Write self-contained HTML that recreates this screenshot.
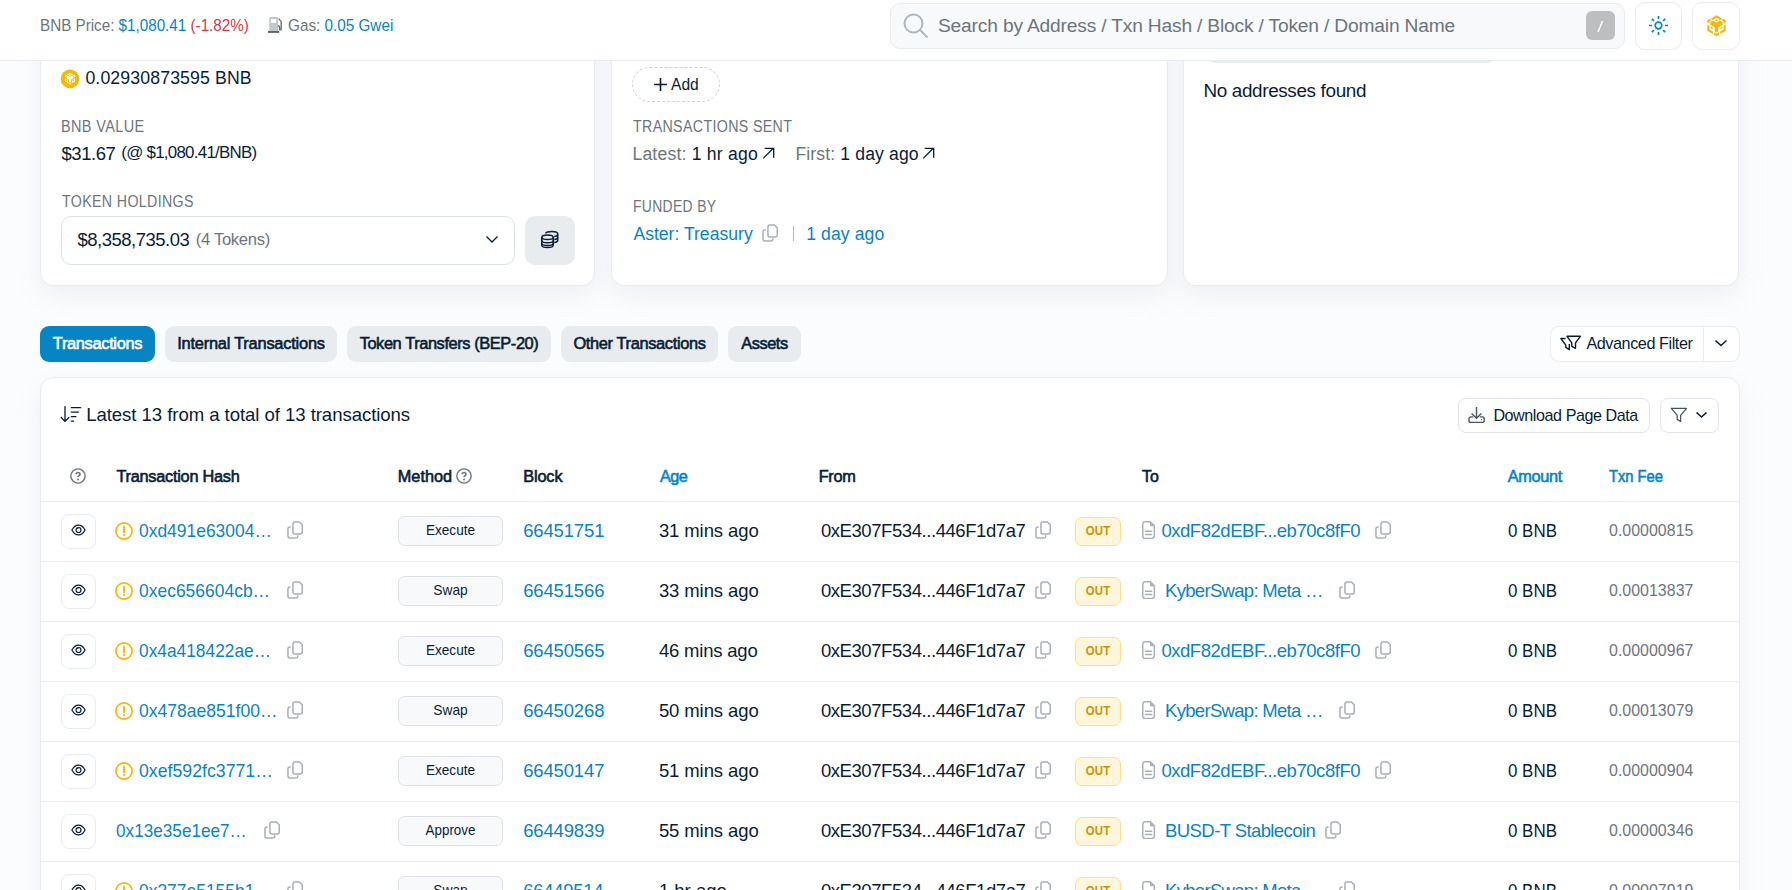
<!DOCTYPE html>
<html><head><meta charset="utf-8"><style>
html,body{margin:0;padding:0;}
body{width:1792px;height:890px;overflow:hidden;position:relative;background:#fbfcfd;font-family:"Liberation Sans",sans-serif;}
.t{position:absolute;white-space:nowrap;}
.b{position:absolute;}
</style></head><body>
<div class="b" style="left:40px;top:-200px;width:555px;height:486px;background:#fff;border:1px solid #e9ecef;border-radius:13px;box-sizing:border-box;box-shadow:0 10px 24px rgba(189,197,209,.2);"></div>
<div class="b" style="left:611px;top:-200px;width:557px;height:486px;background:#fff;border:1px solid #e9ecef;border-radius:13px;box-sizing:border-box;box-shadow:0 10px 24px rgba(189,197,209,.2);"></div>
<div class="b" style="left:1183px;top:-200px;width:556px;height:486px;background:#fff;border:1px solid #e9ecef;border-radius:13px;box-sizing:border-box;box-shadow:0 10px 24px rgba(189,197,209,.2);"></div>
<svg class="b" style="left:60px;top:69px" width="20" height="20" viewBox="0 0 20 20"><circle cx="10" cy="9.9" r="9.3" fill="#f0b90b"/><g fill="#fff" transform="translate(4.75,3.75) scale(0.525)"><path d="M10 0.3L16.2 3.9L13.9 5.2L10 3L6.1 5.2L3.8 3.9Z"/><path d="M10 4.4L11.9 5.5L10 6.6L8.1 5.5Z"/><path d="M0.3 5.5L2.7 4.1L4.9 5.4L2.5 6.8V8.9L0.3 7.6Z"/><path d="M19.7 5.5L17.3 4.1L15.1 5.4L17.5 6.8V8.9L19.7 7.6Z"/><path d="M3.6 7.4L6.5 5.8L10 7.8L13.5 5.8L16.4 7.4V10.4L11.8 13V17.4L10 18.4L8.2 17.4V13L3.6 10.4Z"/><path d="M0.3 9.9L2.5 11.2V15.2L6.2 17.3V19.8L0.3 16.4Z"/><path d="M19.7 9.9L17.5 11.2V15.2L13.8 17.3V19.8L19.7 16.4Z"/><path d="M3.6 11.8L5.9 13.1V15L3.6 13.7Z"/><path d="M16.4 11.8L14.1 13.1V15L16.4 13.7Z"/><path d="M7.3 18.1L10 19.6L12.7 18.1V20.6L10 22.2L7.3 20.6Z"/></g></svg>
<div class="t" style="left:85.40px;top:66.97px;font-size:17.7px;line-height:22px;color:#081d35;letter-spacing:0.125px;">0.02930873595 BNB</div>
<div class="t" style="left:60.91px;top:116.35px;font-size:16.3px;line-height:20px;color:#6c757d;letter-spacing:0.4px;transform:scaleX(0.8913);transform-origin:0 0;">BNB VALUE</div>
<div class="t" style="left:61.50px;top:141.99px;font-size:18.5px;line-height:23px;color:#081d35;letter-spacing:-0.44px;">$31.67</div>
<div class="t" style="left:121.30px;top:141.54px;font-size:16.9px;line-height:21px;color:#081d35;letter-spacing:-0.738px;">(@ $1,080.41/BNB)</div>
<div class="t" style="left:61.80px;top:191.35px;font-size:16.3px;line-height:20px;color:#6c757d;letter-spacing:0.4px;transform:scaleX(0.8733);transform-origin:0 0;">TOKEN HOLDINGS</div>
<div class="b" style="left:61px;top:216px;width:454px;height:49px;border:1px solid #dee2e6;border-radius:10px;box-sizing:border-box;background:#fff;"></div>
<div class="t" style="left:77.50px;top:227.84px;font-size:18.5px;line-height:23px;color:#081d35;letter-spacing:-0.5px;">$8,358,735.03</div>
<div class="t" style="left:195.80px;top:228.55px;font-size:16.6px;line-height:21px;color:#6c757d;letter-spacing:-0.311px;">(4 Tokens)</div>
<svg class="b" style="left:485px;top:235px" width="14" height="9" viewBox="0 0 14 9"><path d="M1.5 1.5l5.5 5.5 5.5-5.5" stroke="#081d35" stroke-width="1.3" fill="none"/></svg>
<div class="b" style="left:525px;top:216px;width:50px;height:49px;background:#e9ecef;border-radius:10px;"></div>
<svg class="b" style="left:540px;top:229px" width="20" height="20" viewBox="0 0 20 20"><g fill="none" stroke="#081d35" stroke-width="1.5"><ellipse cx="7.5" cy="8.3" rx="5.7" ry="2.3"/><path d="M1.8 8.3v8c0 1.3 2.5 2.3 5.7 2.3s5.7-1 5.7-2.3v-8"/><path d="M1.8 11.5c0 1.3 2.5 2.3 5.7 2.3s5.7-1 5.7-2.3M1.8 14.3c0 1.3 2.5 2.3 5.7 2.3s5.7-1 5.7-2.3"/><path d="M5.5 4.3C6.2 3.2 8.6 2.4 12 2.4c3.2 0 5.7 1 5.7 2.3v6.8c0 1-1.5 1.8-3.5 2.1"/><path d="M14.2 7.6c2-.3 3.5-1.1 3.5-2.1"/><path d="M14.2 10.5c2-.3 3.5-1.1 3.5-2.1"/></g></svg>
<div class="b" style="left:632px;top:67px;width:88px;height:35px;border:1px dashed #ced4da;border-radius:18px;box-sizing:border-box;"></div>
<svg class="b" style="left:654px;top:77.5px" width="13" height="13" viewBox="0 0 13 13"><path d="M6.5 0v13M0 6.5h13" stroke="#081d35" stroke-width="1.6"/></svg>
<div class="t" style="left:671.40px;top:73.68px;font-size:16.5px;line-height:21px;color:#081d35;transform:scaleX(0.9448);transform-origin:0 0;">Add</div>
<div class="t" style="left:633.40px;top:116.35px;font-size:16.3px;line-height:20px;color:#6c757d;letter-spacing:0.4px;transform:scaleX(0.8736);transform-origin:0 0;">TRANSACTIONS SENT</div>
<div class="t" style="left:632.40px;top:142.60px;font-size:17.6px;line-height:22px;color:#6c757d;letter-spacing:0.2px;">Latest: <span style="color:#081d35">1 hr ago</span></div>
<svg class="b" style="left:762px;top:146px" width="13" height="13" viewBox="0 0 13 13"><path d="M1.2 12.4L11.3 2.3M2.6 2.3H11.7V11.7" stroke="#081d35" stroke-width="1.3" fill="none"/></svg>
<div class="t" style="left:795.40px;top:142.60px;font-size:17.6px;line-height:22px;color:#6c757d;letter-spacing:0.133px;">First: <span style="color:#081d35">1 day ago</span></div>
<svg class="b" style="left:922px;top:146px" width="13" height="13" viewBox="0 0 13 13"><path d="M1.2 12.4L11.3 2.3M2.6 2.3H11.7V11.7" stroke="#081d35" stroke-width="1.3" fill="none"/></svg>
<div class="t" style="left:632.55px;top:196.35px;font-size:16.3px;line-height:20px;color:#6c757d;letter-spacing:0.4px;transform:scaleX(0.8542);transform-origin:0 0;">FUNDED BY</div>
<div class="t" style="left:633.40px;top:222.90px;font-size:17.6px;line-height:22px;color:#0784c3;">Aster: Treasury</div>
<svg class="b" style="left:762px;top:224px" width="17" height="18" viewBox="0 0 17 18"><g fill="none" stroke="#a9b0b8" stroke-width="1.5"><path d="M5.95 2.95A2 2 0 0 1 7.95 0.95H12.4L15.25 3.8V10.95A2 2 0 0 1 13.25 12.95H7.95A2 2 0 0 1 5.95 10.95Z"/><path d="M3.6 5.95H2.95A2 2 0 0 0 0.95 7.95V15.05A2 2 0 0 0 2.95 17.05H8.75A2 2 0 0 0 10.75 15.05V14.3"/></g></svg>
<div class="b" style="left:793px;top:226px;width:1.2px;height:15px;background:#adb5bd;"></div>
<div class="t" style="left:806.20px;top:222.90px;font-size:17.6px;line-height:22px;color:#0784c3;letter-spacing:0.1px;">1 day ago</div>
<div class="b" style="left:1205px;top:-20px;width:292px;height:83px;border-radius:10px;background:#e9ecef;"></div>
<div class="t" style="left:1203.40px;top:79.35px;font-size:18.9px;line-height:24px;color:#081d35;letter-spacing:-0.353px;">No addresses found</div>
<div class="b" style="left:40px;top:326px;width:115px;height:36px;border-radius:9px;background:#0784c3;"></div>
<div class="t" style="left:52.00px;top:333.12px;font-size:16.4px;line-height:20px;color:#fff;-webkit-text-stroke:0.6px currentColor;letter-spacing:-0.328px;width:91px;text-align:center;">Transactions</div>
<div class="b" style="left:165px;top:326px;width:172px;height:36px;border-radius:9px;background:#e9ecef;"></div>
<div class="t" style="left:177.00px;top:333.12px;font-size:16.4px;line-height:20px;color:#081d35;-webkit-text-stroke:0.6px currentColor;letter-spacing:-0.22px;width:148px;text-align:center;">Internal Transactions</div>
<div class="b" style="left:347px;top:326px;width:204px;height:36px;border-radius:9px;background:#e9ecef;"></div>
<div class="t" style="left:359.00px;top:333.12px;font-size:16.4px;line-height:20px;color:#081d35;-webkit-text-stroke:0.6px currentColor;letter-spacing:-0.409px;width:180px;text-align:center;">Token Transfers (BEP-20)</div>
<div class="b" style="left:561px;top:326px;width:157px;height:36px;border-radius:9px;background:#e9ecef;"></div>
<div class="t" style="left:573.00px;top:333.12px;font-size:16.4px;line-height:20px;color:#081d35;-webkit-text-stroke:0.6px currentColor;letter-spacing:-0.353px;width:133px;text-align:center;">Other Transactions</div>
<div class="b" style="left:728px;top:326px;width:73px;height:36px;border-radius:9px;background:#e9ecef;"></div>
<div class="t" style="left:740.00px;top:333.12px;font-size:16.4px;line-height:20px;color:#081d35;-webkit-text-stroke:0.6px currentColor;letter-spacing:-0.48px;width:49px;text-align:center;">Assets</div>
<div class="b" style="left:1550px;top:326px;width:190px;height:36px;background:#fff;border:1px solid #e9ecef;border-radius:9px;box-sizing:border-box;"></div>
<div class="b" style="left:1703px;top:327px;width:1px;height:34px;background:#e9ecef;"></div>
<svg class="b" style="left:1560px;top:335px" width="22" height="16" viewBox="0 0 22 16"><g fill="none" stroke="#081d35" stroke-width="1.4" stroke-linejoin="round"><path d="M7 1.3H20.3L15.5 7.8V13.3L11.8 11.3V7.8Z"/><path d="M5.6 3.5H0.9L5.8 10.2V12.4L9.3 14.6V9"/></g></svg>
<div class="t" style="left:1586.40px;top:333.29px;font-size:16.2px;line-height:20px;color:#081d35;letter-spacing:-0.429px;">Advanced Filter</div>
<svg class="b" style="left:1714px;top:339px" width="14" height="8" viewBox="0 0 14 8"><path d="M1.5 1.5l5.5 5 5.5-5" stroke="#081d35" stroke-width="1.6" fill="none"/></svg>
<div class="b" style="left:40px;top:377px;width:1700px;height:800px;background:#fff;border:1px solid #e9ecef;border-radius:13px;box-sizing:border-box;box-shadow:0 10px 24px rgba(189,197,209,.2);"></div>
<svg class="b" style="left:60px;top:406px" width="22" height="17" viewBox="0 0 22 17"><g stroke="#081d35" stroke-width="1.3" fill="none" stroke-linecap="round"><path d="M5 0.6V15.4M1.2 11.5L5 15.4L8.8 11.5"/><path d="M11.3 1.7H20.6M11.3 6.1H18.4M11.3 10.7H15.9M11.3 15.1H13.7"/></g></svg>
<div class="t" style="left:86.20px;top:403.06px;font-size:18.6px;line-height:23px;color:#081d35;letter-spacing:-0.066px;">Latest 13 from a total of 13 transactions</div>
<div class="b" style="left:1458px;top:398px;width:192px;height:35px;background:#fff;border:1px solid #e3e6ea;border-radius:8px;box-sizing:border-box;"></div>
<svg class="b" style="left:1468px;top:405px" width="17" height="19" viewBox="0 0 17 19"><g fill="none" stroke="#4b5563" stroke-width="1.4"><path d="M8.5 2V13.3M3.6 8.4L8.5 13.3L13.4 8.4"/><path d="M5.2 11.9H3A2 2 0 0 0 1 13.9V15.4A2 2 0 0 0 3 17.4H14.2A2 2 0 0 0 16.2 15.4V13.9A2 2 0 0 0 14.2 11.9H11.8"/></g><circle cx="13.6" cy="14.6" r="0.7" fill="#4b5563"/></svg>
<div class="t" style="left:1493.40px;top:405.32px;font-size:16.1px;line-height:20px;color:#081d35;letter-spacing:-0.423px;">Download Page Data</div>
<div class="b" style="left:1660px;top:398px;width:59px;height:35px;background:#fff;border:1px solid #e3e6ea;border-radius:8px;box-sizing:border-box;"></div>
<svg class="b" style="left:1670px;top:407px" width="18" height="17" viewBox="0 0 18 17"><path d="M1.3 1.3h15.2l-5.9 7v6.2l-3.4-2.1V8.3z" fill="none" stroke="#4b5563" stroke-width="1.25" stroke-linejoin="round"/></svg>
<svg class="b" style="left:1695px;top:411px" width="13" height="8" viewBox="0 0 13 8"><path d="M1.5 1.5l5 4.5 5-4.5" stroke="#081d35" stroke-width="1.6" fill="none"/></svg>
<svg class="b" style="left:70px;top:468px" width="16" height="16" viewBox="0 0 16 16"><circle cx="8" cy="8" r="7.15" fill="none" stroke="#6c757d" stroke-width="1.4"/><path d="M6.1 6.3c0-1.1.85-1.85 1.95-1.85s1.95.75 1.95 1.75c0 1.4-1.9 1.5-1.9 2.9" stroke="#6c757d" stroke-width="1.6" fill="none"/><circle cx="8.05" cy="11.5" r="1" fill="#6c757d"/></svg>
<div class="t" style="left:116.40px;top:466.35px;font-size:16.3px;line-height:20px;color:#081d35;-webkit-text-stroke:0.6px currentColor;letter-spacing:-0.24px;">Transaction Hash</div>
<div class="t" style="left:397.80px;top:466.35px;font-size:16.3px;line-height:20px;color:#081d35;-webkit-text-stroke:0.6px currentColor;">Method</div>
<svg class="b" style="left:456px;top:468px" width="16" height="16" viewBox="0 0 16 16"><circle cx="8" cy="8" r="7.15" fill="none" stroke="#6c757d" stroke-width="1.4"/><path d="M6.1 6.3c0-1.1.85-1.85 1.95-1.85s1.95.75 1.95 1.75c0 1.4-1.9 1.5-1.9 2.9" stroke="#6c757d" stroke-width="1.6" fill="none"/><circle cx="8.05" cy="11.5" r="1" fill="#6c757d"/></svg>
<div class="t" style="left:523.15px;top:466.35px;font-size:16.3px;line-height:20px;color:#081d35;-webkit-text-stroke:0.6px currentColor;letter-spacing:-0.1px;">Block</div>
<div class="t" style="left:659.90px;top:466.35px;font-size:16.3px;line-height:20px;color:#0784c3;-webkit-text-stroke:0.6px currentColor;letter-spacing:-0.5px;">Age</div>
<div class="t" style="left:818.70px;top:466.35px;font-size:16.3px;line-height:20px;color:#081d35;-webkit-text-stroke:0.6px currentColor;letter-spacing:-0.267px;">From</div>
<div class="t" style="left:1141.60px;top:466.35px;font-size:16.3px;line-height:20px;color:#081d35;-webkit-text-stroke:0.6px currentColor;transform:scaleX(0.9765);transform-origin:0 0;">To</div>
<div class="t" style="left:1507.70px;top:466.35px;font-size:16.3px;line-height:20px;color:#0784c3;-webkit-text-stroke:0.6px currentColor;letter-spacing:-0.32px;">Amount</div>
<div class="t" style="left:1609.00px;top:466.35px;font-size:16.3px;line-height:20px;color:#0784c3;-webkit-text-stroke:0.6px currentColor;transform:scaleX(0.9033);transform-origin:0 0;">Txn Fee</div>
<div class="b" style="left:41px;top:501px;width:1698px;height:1px;background:#e9ecef;"></div>
<div class="b" style="left:61px;top:514px;width:35px;height:35px;border:1px solid #e9ecef;border-radius:8px;box-sizing:border-box;background:#fff;"></div>
<svg class="b" style="left:71px;top:524px" width="15" height="12" viewBox="0 0 15 12"><g fill="none" stroke="#081d35" stroke-width="1.2"><path d="M0.9 6C2.6 2.8 5 1.1 7.5 1.1S12.4 2.8 14.1 6C12.4 9.2 10 10.9 7.5 10.9S2.6 9.2 0.9 6z"/><circle cx="7.5" cy="6" r="2.5"/></g><path d="M6 5a1.5 1.5 0 0 1 1.5-1.3V5z" fill="#081d35"/></svg>
<svg class="b" style="left:115px;top:521.5px" width="18" height="18" viewBox="0 0 18 18"><circle cx="9" cy="9" r="8.1" fill="none" stroke="#ffb300" stroke-width="1.7"/><path d="M9 4.6v5.6" stroke="#ffb300" stroke-width="1.9" stroke-linecap="round"/><circle cx="9" cy="13.1" r="1.05" fill="#ffb300"/></svg>
<div class="t" style="left:139.10px;top:518.89px;font-size:18.5px;line-height:23px;color:#0784c3;transform:scaleX(0.9424);transform-origin:0 0;">0xd491e63004…</div>
<svg class="b" style="left:287px;top:521px" width="17" height="18" viewBox="0 0 17 18"><g fill="none" stroke="#a9b0b8" stroke-width="1.5"><path d="M5.95 2.95A2 2 0 0 1 7.95 0.95H12.4L15.25 3.8V10.95A2 2 0 0 1 13.25 12.95H7.95A2 2 0 0 1 5.95 10.95Z"/><path d="M3.6 5.95H2.95A2 2 0 0 0 0.95 7.95V15.05A2 2 0 0 0 2.95 17.05H8.75A2 2 0 0 0 10.75 15.05V14.3"/></g></svg>
<div class="b" style="left:398px;top:516px;width:105px;height:30px;border:1px solid #dee2e6;border-radius:7px;box-sizing:border-box;background:#f8f9fa;"></div>
<div class="t" style="left:398.00px;top:521.34px;font-size:14.6px;line-height:18px;color:#081d35;transform:scaleX(0.9314);transform-origin:50% 0;width:105px;text-align:center;">Execute</div>
<div class="t" style="left:523.15px;top:518.89px;font-size:18.5px;line-height:23px;color:#0784c3;letter-spacing:-0.143px;">66451751</div>
<div class="t" style="left:658.90px;top:518.89px;font-size:18.5px;line-height:23px;color:#081d35;letter-spacing:-0.1px;">31 mins ago</div>
<div class="t" style="left:820.90px;top:518.89px;font-size:18.5px;line-height:23px;color:#081d35;letter-spacing:-0.429px;">0xE307F534...446F1d7a7</div>
<svg class="b" style="left:1035px;top:521px" width="17" height="18" viewBox="0 0 17 18"><g fill="none" stroke="#a9b0b8" stroke-width="1.5"><path d="M5.95 2.95A2 2 0 0 1 7.95 0.95H12.4L15.25 3.8V10.95A2 2 0 0 1 13.25 12.95H7.95A2 2 0 0 1 5.95 10.95Z"/><path d="M3.6 5.95H2.95A2 2 0 0 0 0.95 7.95V15.05A2 2 0 0 0 2.95 17.05H8.75A2 2 0 0 0 10.75 15.05V14.3"/></g></svg>
<div class="b" style="left:1075px;top:517px;width:46px;height:29px;border:1px solid #ffe08a;border-radius:7px;box-sizing:border-box;background:#fff6dc;"></div>
<div class="t" style="left:1075.00px;top:522.87px;font-size:12.5px;line-height:16px;color:#c99400;font-weight:700;letter-spacing:0.2px;transform:scaleX(0.9148);transform-origin:50% 0;width:46px;text-align:center;">OUT</div>
<svg class="b" style="left:1141px;top:521px" width="15" height="18" viewBox="0 0 15 18"><g fill="none" stroke="#a9b0b8" stroke-width="1.5"><path d="M1.75 2.9A2.1 2.1 0 0 1 3.85 0.8H9.3L13.35 4.9V15.3A2.1 2.1 0 0 1 11.25 17.4H3.85A2.1 2.1 0 0 1 1.75 15.3Z"/><path d="M4.6 10.2H10.6M4.6 13.4H10.6" stroke-linecap="round"/></g><path d="M9 0.8V5.3H13.6Z" fill="#a9b0b8"/></svg>
<div class="t" style="left:1161.40px;top:518.89px;font-size:18.5px;line-height:23px;color:#0784c3;letter-spacing:-0.457px;">0xdF82dEBF...eb70c8fF0</div>
<svg class="b" style="left:1375px;top:521px" width="17" height="18" viewBox="0 0 17 18"><g fill="none" stroke="#a9b0b8" stroke-width="1.5"><path d="M5.95 2.95A2 2 0 0 1 7.95 0.95H12.4L15.25 3.8V10.95A2 2 0 0 1 13.25 12.95H7.95A2 2 0 0 1 5.95 10.95Z"/><path d="M3.6 5.95H2.95A2 2 0 0 0 0.95 7.95V15.05A2 2 0 0 0 2.95 17.05H8.75A2 2 0 0 0 10.75 15.05V14.3"/></g></svg>
<div class="t" style="left:1507.90px;top:518.89px;font-size:18.5px;line-height:23px;color:#081d35;transform:scaleX(0.9151);transform-origin:0 0;">0 BNB</div>
<div class="t" style="left:1609.00px;top:521.09px;font-size:15.9px;line-height:20px;color:#6c757d;letter-spacing:0.044px;">0.00000815</div>
<div class="b" style="left:41px;top:561px;width:1698px;height:1px;background:#e9ecef;"></div>
<div class="b" style="left:61px;top:574px;width:35px;height:35px;border:1px solid #e9ecef;border-radius:8px;box-sizing:border-box;background:#fff;"></div>
<svg class="b" style="left:71px;top:584px" width="15" height="12" viewBox="0 0 15 12"><g fill="none" stroke="#081d35" stroke-width="1.2"><path d="M0.9 6C2.6 2.8 5 1.1 7.5 1.1S12.4 2.8 14.1 6C12.4 9.2 10 10.9 7.5 10.9S2.6 9.2 0.9 6z"/><circle cx="7.5" cy="6" r="2.5"/></g><path d="M6 5a1.5 1.5 0 0 1 1.5-1.3V5z" fill="#081d35"/></svg>
<svg class="b" style="left:115px;top:581.5px" width="18" height="18" viewBox="0 0 18 18"><circle cx="9" cy="9" r="8.1" fill="none" stroke="#ffb300" stroke-width="1.7"/><path d="M9 4.6v5.6" stroke="#ffb300" stroke-width="1.9" stroke-linecap="round"/><circle cx="9" cy="13.1" r="1.05" fill="#ffb300"/></svg>
<div class="t" style="left:139.10px;top:578.89px;font-size:18.5px;line-height:23px;color:#0784c3;transform:scaleX(0.9438);transform-origin:0 0;">0xec656604cb…</div>
<svg class="b" style="left:287px;top:581px" width="17" height="18" viewBox="0 0 17 18"><g fill="none" stroke="#a9b0b8" stroke-width="1.5"><path d="M5.95 2.95A2 2 0 0 1 7.95 0.95H12.4L15.25 3.8V10.95A2 2 0 0 1 13.25 12.95H7.95A2 2 0 0 1 5.95 10.95Z"/><path d="M3.6 5.95H2.95A2 2 0 0 0 0.95 7.95V15.05A2 2 0 0 0 2.95 17.05H8.75A2 2 0 0 0 10.75 15.05V14.3"/></g></svg>
<div class="b" style="left:398px;top:576px;width:105px;height:30px;border:1px solid #dee2e6;border-radius:7px;box-sizing:border-box;background:#f8f9fa;"></div>
<div class="t" style="left:398.00px;top:581.34px;font-size:14.6px;line-height:18px;color:#081d35;transform:scaleX(0.9429);transform-origin:50% 0;width:105px;text-align:center;">Swap</div>
<div class="t" style="left:523.15px;top:578.89px;font-size:18.5px;line-height:23px;color:#0784c3;letter-spacing:-0.143px;">66451566</div>
<div class="t" style="left:658.90px;top:578.89px;font-size:18.5px;line-height:23px;color:#081d35;letter-spacing:-0.1px;">33 mins ago</div>
<div class="t" style="left:820.90px;top:578.89px;font-size:18.5px;line-height:23px;color:#081d35;letter-spacing:-0.429px;">0xE307F534...446F1d7a7</div>
<svg class="b" style="left:1035px;top:581px" width="17" height="18" viewBox="0 0 17 18"><g fill="none" stroke="#a9b0b8" stroke-width="1.5"><path d="M5.95 2.95A2 2 0 0 1 7.95 0.95H12.4L15.25 3.8V10.95A2 2 0 0 1 13.25 12.95H7.95A2 2 0 0 1 5.95 10.95Z"/><path d="M3.6 5.95H2.95A2 2 0 0 0 0.95 7.95V15.05A2 2 0 0 0 2.95 17.05H8.75A2 2 0 0 0 10.75 15.05V14.3"/></g></svg>
<div class="b" style="left:1075px;top:577px;width:46px;height:29px;border:1px solid #ffe08a;border-radius:7px;box-sizing:border-box;background:#fff6dc;"></div>
<div class="t" style="left:1075.00px;top:582.87px;font-size:12.5px;line-height:16px;color:#c99400;font-weight:700;letter-spacing:0.2px;transform:scaleX(0.9148);transform-origin:50% 0;width:46px;text-align:center;">OUT</div>
<svg class="b" style="left:1141px;top:581px" width="15" height="18" viewBox="0 0 15 18"><g fill="none" stroke="#a9b0b8" stroke-width="1.5"><path d="M1.75 2.9A2.1 2.1 0 0 1 3.85 0.8H9.3L13.35 4.9V15.3A2.1 2.1 0 0 1 11.25 17.4H3.85A2.1 2.1 0 0 1 1.75 15.3Z"/><path d="M4.6 10.2H10.6M4.6 13.4H10.6" stroke-linecap="round"/></g><path d="M9 0.8V5.3H13.6Z" fill="#a9b0b8"/></svg>
<div class="t" style="left:1165.10px;top:578.89px;font-size:18.5px;line-height:23px;color:#0784c3;letter-spacing:-0.7px;">KyberSwap: Meta …</div>
<svg class="b" style="left:1339px;top:581px" width="17" height="18" viewBox="0 0 17 18"><g fill="none" stroke="#a9b0b8" stroke-width="1.5"><path d="M5.95 2.95A2 2 0 0 1 7.95 0.95H12.4L15.25 3.8V10.95A2 2 0 0 1 13.25 12.95H7.95A2 2 0 0 1 5.95 10.95Z"/><path d="M3.6 5.95H2.95A2 2 0 0 0 0.95 7.95V15.05A2 2 0 0 0 2.95 17.05H8.75A2 2 0 0 0 10.75 15.05V14.3"/></g></svg>
<div class="t" style="left:1507.90px;top:578.89px;font-size:18.5px;line-height:23px;color:#081d35;transform:scaleX(0.9151);transform-origin:0 0;">0 BNB</div>
<div class="t" style="left:1609.00px;top:581.09px;font-size:15.9px;line-height:20px;color:#6c757d;letter-spacing:0.044px;">0.00013837</div>
<div class="b" style="left:41px;top:621px;width:1698px;height:1px;background:#e9ecef;"></div>
<div class="b" style="left:61px;top:634px;width:35px;height:35px;border:1px solid #e9ecef;border-radius:8px;box-sizing:border-box;background:#fff;"></div>
<svg class="b" style="left:71px;top:644px" width="15" height="12" viewBox="0 0 15 12"><g fill="none" stroke="#081d35" stroke-width="1.2"><path d="M0.9 6C2.6 2.8 5 1.1 7.5 1.1S12.4 2.8 14.1 6C12.4 9.2 10 10.9 7.5 10.9S2.6 9.2 0.9 6z"/><circle cx="7.5" cy="6" r="2.5"/></g><path d="M6 5a1.5 1.5 0 0 1 1.5-1.3V5z" fill="#081d35"/></svg>
<svg class="b" style="left:115px;top:641.5px" width="18" height="18" viewBox="0 0 18 18"><circle cx="9" cy="9" r="8.1" fill="none" stroke="#ffb300" stroke-width="1.7"/><path d="M9 4.6v5.6" stroke="#ffb300" stroke-width="1.9" stroke-linecap="round"/><circle cx="9" cy="13.1" r="1.05" fill="#ffb300"/></svg>
<div class="t" style="left:139.10px;top:638.89px;font-size:18.5px;line-height:23px;color:#0784c3;transform:scaleX(0.9367);transform-origin:0 0;">0x4a418422ae…</div>
<svg class="b" style="left:287px;top:641px" width="17" height="18" viewBox="0 0 17 18"><g fill="none" stroke="#a9b0b8" stroke-width="1.5"><path d="M5.95 2.95A2 2 0 0 1 7.95 0.95H12.4L15.25 3.8V10.95A2 2 0 0 1 13.25 12.95H7.95A2 2 0 0 1 5.95 10.95Z"/><path d="M3.6 5.95H2.95A2 2 0 0 0 0.95 7.95V15.05A2 2 0 0 0 2.95 17.05H8.75A2 2 0 0 0 10.75 15.05V14.3"/></g></svg>
<div class="b" style="left:398px;top:636px;width:105px;height:30px;border:1px solid #dee2e6;border-radius:7px;box-sizing:border-box;background:#f8f9fa;"></div>
<div class="t" style="left:398.00px;top:641.34px;font-size:14.6px;line-height:18px;color:#081d35;transform:scaleX(0.9314);transform-origin:50% 0;width:105px;text-align:center;">Execute</div>
<div class="t" style="left:523.15px;top:638.89px;font-size:18.5px;line-height:23px;color:#0784c3;letter-spacing:-0.143px;">66450565</div>
<div class="t" style="left:658.90px;top:638.89px;font-size:18.5px;line-height:23px;color:#081d35;letter-spacing:-0.2px;">46 mins ago</div>
<div class="t" style="left:820.90px;top:638.89px;font-size:18.5px;line-height:23px;color:#081d35;letter-spacing:-0.429px;">0xE307F534...446F1d7a7</div>
<svg class="b" style="left:1035px;top:641px" width="17" height="18" viewBox="0 0 17 18"><g fill="none" stroke="#a9b0b8" stroke-width="1.5"><path d="M5.95 2.95A2 2 0 0 1 7.95 0.95H12.4L15.25 3.8V10.95A2 2 0 0 1 13.25 12.95H7.95A2 2 0 0 1 5.95 10.95Z"/><path d="M3.6 5.95H2.95A2 2 0 0 0 0.95 7.95V15.05A2 2 0 0 0 2.95 17.05H8.75A2 2 0 0 0 10.75 15.05V14.3"/></g></svg>
<div class="b" style="left:1075px;top:637px;width:46px;height:29px;border:1px solid #ffe08a;border-radius:7px;box-sizing:border-box;background:#fff6dc;"></div>
<div class="t" style="left:1075.00px;top:642.87px;font-size:12.5px;line-height:16px;color:#c99400;font-weight:700;letter-spacing:0.2px;transform:scaleX(0.9148);transform-origin:50% 0;width:46px;text-align:center;">OUT</div>
<svg class="b" style="left:1141px;top:641px" width="15" height="18" viewBox="0 0 15 18"><g fill="none" stroke="#a9b0b8" stroke-width="1.5"><path d="M1.75 2.9A2.1 2.1 0 0 1 3.85 0.8H9.3L13.35 4.9V15.3A2.1 2.1 0 0 1 11.25 17.4H3.85A2.1 2.1 0 0 1 1.75 15.3Z"/><path d="M4.6 10.2H10.6M4.6 13.4H10.6" stroke-linecap="round"/></g><path d="M9 0.8V5.3H13.6Z" fill="#a9b0b8"/></svg>
<div class="t" style="left:1161.40px;top:638.89px;font-size:18.5px;line-height:23px;color:#0784c3;letter-spacing:-0.457px;">0xdF82dEBF...eb70c8fF0</div>
<svg class="b" style="left:1375px;top:641px" width="17" height="18" viewBox="0 0 17 18"><g fill="none" stroke="#a9b0b8" stroke-width="1.5"><path d="M5.95 2.95A2 2 0 0 1 7.95 0.95H12.4L15.25 3.8V10.95A2 2 0 0 1 13.25 12.95H7.95A2 2 0 0 1 5.95 10.95Z"/><path d="M3.6 5.95H2.95A2 2 0 0 0 0.95 7.95V15.05A2 2 0 0 0 2.95 17.05H8.75A2 2 0 0 0 10.75 15.05V14.3"/></g></svg>
<div class="t" style="left:1507.90px;top:638.89px;font-size:18.5px;line-height:23px;color:#081d35;transform:scaleX(0.9151);transform-origin:0 0;">0 BNB</div>
<div class="t" style="left:1609.00px;top:641.09px;font-size:15.9px;line-height:20px;color:#6c757d;letter-spacing:0.044px;">0.00000967</div>
<div class="b" style="left:41px;top:681px;width:1698px;height:1px;background:#e9ecef;"></div>
<div class="b" style="left:61px;top:694px;width:35px;height:35px;border:1px solid #e9ecef;border-radius:8px;box-sizing:border-box;background:#fff;"></div>
<svg class="b" style="left:71px;top:704px" width="15" height="12" viewBox="0 0 15 12"><g fill="none" stroke="#081d35" stroke-width="1.2"><path d="M0.9 6C2.6 2.8 5 1.1 7.5 1.1S12.4 2.8 14.1 6C12.4 9.2 10 10.9 7.5 10.9S2.6 9.2 0.9 6z"/><circle cx="7.5" cy="6" r="2.5"/></g><path d="M6 5a1.5 1.5 0 0 1 1.5-1.3V5z" fill="#081d35"/></svg>
<svg class="b" style="left:115px;top:701.5px" width="18" height="18" viewBox="0 0 18 18"><circle cx="9" cy="9" r="8.1" fill="none" stroke="#ffb300" stroke-width="1.7"/><path d="M9 4.6v5.6" stroke="#ffb300" stroke-width="1.9" stroke-linecap="round"/><circle cx="9" cy="13.1" r="1.05" fill="#ffb300"/></svg>
<div class="t" style="left:139.10px;top:698.89px;font-size:18.5px;line-height:23px;color:#0784c3;transform:scaleX(0.9486);transform-origin:0 0;">0x478ae851f00…</div>
<svg class="b" style="left:287px;top:701px" width="17" height="18" viewBox="0 0 17 18"><g fill="none" stroke="#a9b0b8" stroke-width="1.5"><path d="M5.95 2.95A2 2 0 0 1 7.95 0.95H12.4L15.25 3.8V10.95A2 2 0 0 1 13.25 12.95H7.95A2 2 0 0 1 5.95 10.95Z"/><path d="M3.6 5.95H2.95A2 2 0 0 0 0.95 7.95V15.05A2 2 0 0 0 2.95 17.05H8.75A2 2 0 0 0 10.75 15.05V14.3"/></g></svg>
<div class="b" style="left:398px;top:696px;width:105px;height:30px;border:1px solid #dee2e6;border-radius:7px;box-sizing:border-box;background:#f8f9fa;"></div>
<div class="t" style="left:398.00px;top:701.34px;font-size:14.6px;line-height:18px;color:#081d35;transform:scaleX(0.9429);transform-origin:50% 0;width:105px;text-align:center;">Swap</div>
<div class="t" style="left:523.15px;top:698.89px;font-size:18.5px;line-height:23px;color:#0784c3;letter-spacing:-0.143px;">66450268</div>
<div class="t" style="left:658.90px;top:698.89px;font-size:18.5px;line-height:23px;color:#081d35;letter-spacing:-0.1px;">50 mins ago</div>
<div class="t" style="left:820.90px;top:698.89px;font-size:18.5px;line-height:23px;color:#081d35;letter-spacing:-0.429px;">0xE307F534...446F1d7a7</div>
<svg class="b" style="left:1035px;top:701px" width="17" height="18" viewBox="0 0 17 18"><g fill="none" stroke="#a9b0b8" stroke-width="1.5"><path d="M5.95 2.95A2 2 0 0 1 7.95 0.95H12.4L15.25 3.8V10.95A2 2 0 0 1 13.25 12.95H7.95A2 2 0 0 1 5.95 10.95Z"/><path d="M3.6 5.95H2.95A2 2 0 0 0 0.95 7.95V15.05A2 2 0 0 0 2.95 17.05H8.75A2 2 0 0 0 10.75 15.05V14.3"/></g></svg>
<div class="b" style="left:1075px;top:697px;width:46px;height:29px;border:1px solid #ffe08a;border-radius:7px;box-sizing:border-box;background:#fff6dc;"></div>
<div class="t" style="left:1075.00px;top:702.87px;font-size:12.5px;line-height:16px;color:#c99400;font-weight:700;letter-spacing:0.2px;transform:scaleX(0.9148);transform-origin:50% 0;width:46px;text-align:center;">OUT</div>
<svg class="b" style="left:1141px;top:701px" width="15" height="18" viewBox="0 0 15 18"><g fill="none" stroke="#a9b0b8" stroke-width="1.5"><path d="M1.75 2.9A2.1 2.1 0 0 1 3.85 0.8H9.3L13.35 4.9V15.3A2.1 2.1 0 0 1 11.25 17.4H3.85A2.1 2.1 0 0 1 1.75 15.3Z"/><path d="M4.6 10.2H10.6M4.6 13.4H10.6" stroke-linecap="round"/></g><path d="M9 0.8V5.3H13.6Z" fill="#a9b0b8"/></svg>
<div class="t" style="left:1165.10px;top:698.89px;font-size:18.5px;line-height:23px;color:#0784c3;letter-spacing:-0.7px;">KyberSwap: Meta …</div>
<svg class="b" style="left:1339px;top:701px" width="17" height="18" viewBox="0 0 17 18"><g fill="none" stroke="#a9b0b8" stroke-width="1.5"><path d="M5.95 2.95A2 2 0 0 1 7.95 0.95H12.4L15.25 3.8V10.95A2 2 0 0 1 13.25 12.95H7.95A2 2 0 0 1 5.95 10.95Z"/><path d="M3.6 5.95H2.95A2 2 0 0 0 0.95 7.95V15.05A2 2 0 0 0 2.95 17.05H8.75A2 2 0 0 0 10.75 15.05V14.3"/></g></svg>
<div class="t" style="left:1507.90px;top:698.89px;font-size:18.5px;line-height:23px;color:#081d35;transform:scaleX(0.9151);transform-origin:0 0;">0 BNB</div>
<div class="t" style="left:1609.00px;top:701.09px;font-size:15.9px;line-height:20px;color:#6c757d;letter-spacing:0.044px;">0.00013079</div>
<div class="b" style="left:41px;top:741px;width:1698px;height:1px;background:#e9ecef;"></div>
<div class="b" style="left:61px;top:754px;width:35px;height:35px;border:1px solid #e9ecef;border-radius:8px;box-sizing:border-box;background:#fff;"></div>
<svg class="b" style="left:71px;top:764px" width="15" height="12" viewBox="0 0 15 12"><g fill="none" stroke="#081d35" stroke-width="1.2"><path d="M0.9 6C2.6 2.8 5 1.1 7.5 1.1S12.4 2.8 14.1 6C12.4 9.2 10 10.9 7.5 10.9S2.6 9.2 0.9 6z"/><circle cx="7.5" cy="6" r="2.5"/></g><path d="M6 5a1.5 1.5 0 0 1 1.5-1.3V5z" fill="#081d35"/></svg>
<svg class="b" style="left:115px;top:761.5px" width="18" height="18" viewBox="0 0 18 18"><circle cx="9" cy="9" r="8.1" fill="none" stroke="#ffb300" stroke-width="1.7"/><path d="M9 4.6v5.6" stroke="#ffb300" stroke-width="1.9" stroke-linecap="round"/><circle cx="9" cy="13.1" r="1.05" fill="#ffb300"/></svg>
<div class="t" style="left:139.10px;top:758.89px;font-size:18.5px;line-height:23px;color:#0784c3;transform:scaleX(0.9572);transform-origin:0 0;">0xef592fc3771…</div>
<svg class="b" style="left:287px;top:761px" width="17" height="18" viewBox="0 0 17 18"><g fill="none" stroke="#a9b0b8" stroke-width="1.5"><path d="M5.95 2.95A2 2 0 0 1 7.95 0.95H12.4L15.25 3.8V10.95A2 2 0 0 1 13.25 12.95H7.95A2 2 0 0 1 5.95 10.95Z"/><path d="M3.6 5.95H2.95A2 2 0 0 0 0.95 7.95V15.05A2 2 0 0 0 2.95 17.05H8.75A2 2 0 0 0 10.75 15.05V14.3"/></g></svg>
<div class="b" style="left:398px;top:756px;width:105px;height:30px;border:1px solid #dee2e6;border-radius:7px;box-sizing:border-box;background:#f8f9fa;"></div>
<div class="t" style="left:398.00px;top:761.34px;font-size:14.6px;line-height:18px;color:#081d35;transform:scaleX(0.9314);transform-origin:50% 0;width:105px;text-align:center;">Execute</div>
<div class="t" style="left:523.15px;top:758.89px;font-size:18.5px;line-height:23px;color:#0784c3;letter-spacing:-0.143px;">66450147</div>
<div class="t" style="left:658.90px;top:758.89px;font-size:18.5px;line-height:23px;color:#081d35;letter-spacing:-0.1px;">51 mins ago</div>
<div class="t" style="left:820.90px;top:758.89px;font-size:18.5px;line-height:23px;color:#081d35;letter-spacing:-0.429px;">0xE307F534...446F1d7a7</div>
<svg class="b" style="left:1035px;top:761px" width="17" height="18" viewBox="0 0 17 18"><g fill="none" stroke="#a9b0b8" stroke-width="1.5"><path d="M5.95 2.95A2 2 0 0 1 7.95 0.95H12.4L15.25 3.8V10.95A2 2 0 0 1 13.25 12.95H7.95A2 2 0 0 1 5.95 10.95Z"/><path d="M3.6 5.95H2.95A2 2 0 0 0 0.95 7.95V15.05A2 2 0 0 0 2.95 17.05H8.75A2 2 0 0 0 10.75 15.05V14.3"/></g></svg>
<div class="b" style="left:1075px;top:757px;width:46px;height:29px;border:1px solid #ffe08a;border-radius:7px;box-sizing:border-box;background:#fff6dc;"></div>
<div class="t" style="left:1075.00px;top:762.87px;font-size:12.5px;line-height:16px;color:#c99400;font-weight:700;letter-spacing:0.2px;transform:scaleX(0.9148);transform-origin:50% 0;width:46px;text-align:center;">OUT</div>
<svg class="b" style="left:1141px;top:761px" width="15" height="18" viewBox="0 0 15 18"><g fill="none" stroke="#a9b0b8" stroke-width="1.5"><path d="M1.75 2.9A2.1 2.1 0 0 1 3.85 0.8H9.3L13.35 4.9V15.3A2.1 2.1 0 0 1 11.25 17.4H3.85A2.1 2.1 0 0 1 1.75 15.3Z"/><path d="M4.6 10.2H10.6M4.6 13.4H10.6" stroke-linecap="round"/></g><path d="M9 0.8V5.3H13.6Z" fill="#a9b0b8"/></svg>
<div class="t" style="left:1161.40px;top:758.89px;font-size:18.5px;line-height:23px;color:#0784c3;letter-spacing:-0.457px;">0xdF82dEBF...eb70c8fF0</div>
<svg class="b" style="left:1375px;top:761px" width="17" height="18" viewBox="0 0 17 18"><g fill="none" stroke="#a9b0b8" stroke-width="1.5"><path d="M5.95 2.95A2 2 0 0 1 7.95 0.95H12.4L15.25 3.8V10.95A2 2 0 0 1 13.25 12.95H7.95A2 2 0 0 1 5.95 10.95Z"/><path d="M3.6 5.95H2.95A2 2 0 0 0 0.95 7.95V15.05A2 2 0 0 0 2.95 17.05H8.75A2 2 0 0 0 10.75 15.05V14.3"/></g></svg>
<div class="t" style="left:1507.90px;top:758.89px;font-size:18.5px;line-height:23px;color:#081d35;transform:scaleX(0.9151);transform-origin:0 0;">0 BNB</div>
<div class="t" style="left:1609.00px;top:761.09px;font-size:15.9px;line-height:20px;color:#6c757d;letter-spacing:0.044px;">0.00000904</div>
<div class="b" style="left:41px;top:801px;width:1698px;height:1px;background:#e9ecef;"></div>
<div class="b" style="left:61px;top:814px;width:35px;height:35px;border:1px solid #e9ecef;border-radius:8px;box-sizing:border-box;background:#fff;"></div>
<svg class="b" style="left:71px;top:824px" width="15" height="12" viewBox="0 0 15 12"><g fill="none" stroke="#081d35" stroke-width="1.2"><path d="M0.9 6C2.6 2.8 5 1.1 7.5 1.1S12.4 2.8 14.1 6C12.4 9.2 10 10.9 7.5 10.9S2.6 9.2 0.9 6z"/><circle cx="7.5" cy="6" r="2.5"/></g><path d="M6 5a1.5 1.5 0 0 1 1.5-1.3V5z" fill="#081d35"/></svg>
<div class="t" style="left:115.60px;top:818.89px;font-size:18.5px;line-height:23px;color:#0784c3;transform:scaleX(0.9281);transform-origin:0 0;">0x13e35e1ee7…</div>
<svg class="b" style="left:264px;top:821px" width="17" height="18" viewBox="0 0 17 18"><g fill="none" stroke="#a9b0b8" stroke-width="1.5"><path d="M5.95 2.95A2 2 0 0 1 7.95 0.95H12.4L15.25 3.8V10.95A2 2 0 0 1 13.25 12.95H7.95A2 2 0 0 1 5.95 10.95Z"/><path d="M3.6 5.95H2.95A2 2 0 0 0 0.95 7.95V15.05A2 2 0 0 0 2.95 17.05H8.75A2 2 0 0 0 10.75 15.05V14.3"/></g></svg>
<div class="b" style="left:398px;top:816px;width:105px;height:30px;border:1px solid #dee2e6;border-radius:7px;box-sizing:border-box;background:#f8f9fa;"></div>
<div class="t" style="left:398.00px;top:821.34px;font-size:14.6px;line-height:18px;color:#081d35;transform:scaleX(0.9167);transform-origin:50% 0;width:105px;text-align:center;">Approve</div>
<div class="t" style="left:523.15px;top:818.89px;font-size:18.5px;line-height:23px;color:#0784c3;letter-spacing:-0.143px;">66449839</div>
<div class="t" style="left:658.90px;top:818.89px;font-size:18.5px;line-height:23px;color:#081d35;letter-spacing:-0.1px;">55 mins ago</div>
<div class="t" style="left:820.90px;top:818.89px;font-size:18.5px;line-height:23px;color:#081d35;letter-spacing:-0.429px;">0xE307F534...446F1d7a7</div>
<svg class="b" style="left:1035px;top:821px" width="17" height="18" viewBox="0 0 17 18"><g fill="none" stroke="#a9b0b8" stroke-width="1.5"><path d="M5.95 2.95A2 2 0 0 1 7.95 0.95H12.4L15.25 3.8V10.95A2 2 0 0 1 13.25 12.95H7.95A2 2 0 0 1 5.95 10.95Z"/><path d="M3.6 5.95H2.95A2 2 0 0 0 0.95 7.95V15.05A2 2 0 0 0 2.95 17.05H8.75A2 2 0 0 0 10.75 15.05V14.3"/></g></svg>
<div class="b" style="left:1075px;top:817px;width:46px;height:29px;border:1px solid #ffe08a;border-radius:7px;box-sizing:border-box;background:#fff6dc;"></div>
<div class="t" style="left:1075.00px;top:822.87px;font-size:12.5px;line-height:16px;color:#c99400;font-weight:700;letter-spacing:0.2px;transform:scaleX(0.9148);transform-origin:50% 0;width:46px;text-align:center;">OUT</div>
<svg class="b" style="left:1141px;top:821px" width="15" height="18" viewBox="0 0 15 18"><g fill="none" stroke="#a9b0b8" stroke-width="1.5"><path d="M1.75 2.9A2.1 2.1 0 0 1 3.85 0.8H9.3L13.35 4.9V15.3A2.1 2.1 0 0 1 11.25 17.4H3.85A2.1 2.1 0 0 1 1.75 15.3Z"/><path d="M4.6 10.2H10.6M4.6 13.4H10.6" stroke-linecap="round"/></g><path d="M9 0.8V5.3H13.6Z" fill="#a9b0b8"/></svg>
<div class="t" style="left:1165.10px;top:818.89px;font-size:18.5px;line-height:23px;color:#0784c3;letter-spacing:-0.588px;">BUSD-T Stablecoin</div>
<svg class="b" style="left:1325px;top:821px" width="17" height="18" viewBox="0 0 17 18"><g fill="none" stroke="#a9b0b8" stroke-width="1.5"><path d="M5.95 2.95A2 2 0 0 1 7.95 0.95H12.4L15.25 3.8V10.95A2 2 0 0 1 13.25 12.95H7.95A2 2 0 0 1 5.95 10.95Z"/><path d="M3.6 5.95H2.95A2 2 0 0 0 0.95 7.95V15.05A2 2 0 0 0 2.95 17.05H8.75A2 2 0 0 0 10.75 15.05V14.3"/></g></svg>
<div class="t" style="left:1507.90px;top:818.89px;font-size:18.5px;line-height:23px;color:#081d35;transform:scaleX(0.9151);transform-origin:0 0;">0 BNB</div>
<div class="t" style="left:1609.00px;top:821.09px;font-size:15.9px;line-height:20px;color:#6c757d;letter-spacing:0.044px;">0.00000346</div>
<div class="b" style="left:41px;top:861px;width:1698px;height:1px;background:#e9ecef;"></div>
<div class="b" style="left:61px;top:874px;width:35px;height:35px;border:1px solid #e9ecef;border-radius:8px;box-sizing:border-box;background:#fff;"></div>
<svg class="b" style="left:71px;top:884px" width="15" height="12" viewBox="0 0 15 12"><g fill="none" stroke="#081d35" stroke-width="1.2"><path d="M0.9 6C2.6 2.8 5 1.1 7.5 1.1S12.4 2.8 14.1 6C12.4 9.2 10 10.9 7.5 10.9S2.6 9.2 0.9 6z"/><circle cx="7.5" cy="6" r="2.5"/></g><path d="M6 5a1.5 1.5 0 0 1 1.5-1.3V5z" fill="#081d35"/></svg>
<svg class="b" style="left:115px;top:881.5px" width="18" height="18" viewBox="0 0 18 18"><circle cx="9" cy="9" r="8.1" fill="none" stroke="#ffb300" stroke-width="1.7"/><path d="M9 4.6v5.6" stroke="#ffb300" stroke-width="1.9" stroke-linecap="round"/><circle cx="9" cy="13.1" r="1.05" fill="#ffb300"/></svg>
<div class="t" style="left:139.10px;top:878.89px;font-size:18.5px;line-height:23px;color:#0784c3;transform:scaleX(0.9424);transform-origin:0 0;">0x377e5155b1…</div>
<svg class="b" style="left:287px;top:881px" width="17" height="18" viewBox="0 0 17 18"><g fill="none" stroke="#a9b0b8" stroke-width="1.5"><path d="M5.95 2.95A2 2 0 0 1 7.95 0.95H12.4L15.25 3.8V10.95A2 2 0 0 1 13.25 12.95H7.95A2 2 0 0 1 5.95 10.95Z"/><path d="M3.6 5.95H2.95A2 2 0 0 0 0.95 7.95V15.05A2 2 0 0 0 2.95 17.05H8.75A2 2 0 0 0 10.75 15.05V14.3"/></g></svg>
<div class="b" style="left:398px;top:876px;width:105px;height:30px;border:1px solid #dee2e6;border-radius:7px;box-sizing:border-box;background:#f8f9fa;"></div>
<div class="t" style="left:398.00px;top:881.34px;font-size:14.6px;line-height:18px;color:#081d35;transform:scaleX(0.9429);transform-origin:50% 0;width:105px;text-align:center;">Swap</div>
<div class="t" style="left:523.15px;top:878.89px;font-size:18.5px;line-height:23px;color:#0784c3;letter-spacing:-0.285px;">66449514</div>
<div class="t" style="left:658.90px;top:878.89px;font-size:18.5px;line-height:23px;color:#081d35;">1 hr ago</div>
<div class="t" style="left:820.90px;top:878.89px;font-size:18.5px;line-height:23px;color:#081d35;letter-spacing:-0.429px;">0xE307F534...446F1d7a7</div>
<svg class="b" style="left:1035px;top:881px" width="17" height="18" viewBox="0 0 17 18"><g fill="none" stroke="#a9b0b8" stroke-width="1.5"><path d="M5.95 2.95A2 2 0 0 1 7.95 0.95H12.4L15.25 3.8V10.95A2 2 0 0 1 13.25 12.95H7.95A2 2 0 0 1 5.95 10.95Z"/><path d="M3.6 5.95H2.95A2 2 0 0 0 0.95 7.95V15.05A2 2 0 0 0 2.95 17.05H8.75A2 2 0 0 0 10.75 15.05V14.3"/></g></svg>
<div class="b" style="left:1075px;top:877px;width:46px;height:29px;border:1px solid #ffe08a;border-radius:7px;box-sizing:border-box;background:#fff6dc;"></div>
<div class="t" style="left:1075.00px;top:882.87px;font-size:12.5px;line-height:16px;color:#c99400;font-weight:700;letter-spacing:0.2px;transform:scaleX(0.9148);transform-origin:50% 0;width:46px;text-align:center;">OUT</div>
<svg class="b" style="left:1141px;top:881px" width="15" height="18" viewBox="0 0 15 18"><g fill="none" stroke="#a9b0b8" stroke-width="1.5"><path d="M1.75 2.9A2.1 2.1 0 0 1 3.85 0.8H9.3L13.35 4.9V15.3A2.1 2.1 0 0 1 11.25 17.4H3.85A2.1 2.1 0 0 1 1.75 15.3Z"/><path d="M4.6 10.2H10.6M4.6 13.4H10.6" stroke-linecap="round"/></g><path d="M9 0.8V5.3H13.6Z" fill="#a9b0b8"/></svg>
<div class="t" style="left:1165.10px;top:878.89px;font-size:18.5px;line-height:23px;color:#0784c3;letter-spacing:-0.7px;">KyberSwap: Meta …</div>
<svg class="b" style="left:1339px;top:881px" width="17" height="18" viewBox="0 0 17 18"><g fill="none" stroke="#a9b0b8" stroke-width="1.5"><path d="M5.95 2.95A2 2 0 0 1 7.95 0.95H12.4L15.25 3.8V10.95A2 2 0 0 1 13.25 12.95H7.95A2 2 0 0 1 5.95 10.95Z"/><path d="M3.6 5.95H2.95A2 2 0 0 0 0.95 7.95V15.05A2 2 0 0 0 2.95 17.05H8.75A2 2 0 0 0 10.75 15.05V14.3"/></g></svg>
<div class="t" style="left:1507.90px;top:878.89px;font-size:18.5px;line-height:23px;color:#081d35;transform:scaleX(0.9151);transform-origin:0 0;">0 BNB</div>
<div class="t" style="left:1609.00px;top:881.09px;font-size:15.9px;line-height:20px;color:#6c757d;letter-spacing:0.044px;">0.00007919</div>
<div class="b" style="left:41px;top:921px;width:1698px;height:1px;background:#e9ecef;"></div>
<div class="b" style="left:0px;top:0px;width:1792px;height:61px;background:#fff;border-bottom:1px solid #e9ecef;box-sizing:border-box;"></div>
<div class="t" style="left:39.50px;top:14.54px;font-size:16.9px;line-height:21px;color:#6c757d;transform:scaleX(0.9004);transform-origin:0 0;">BNB Price: <span style="color:#0784c3">$1,080.41</span> <span style="color:#dc3545">(-1.82%)</span></div>
<svg class="b" style="left:267px;top:15px" width="18" height="19" viewBox="0 0 18 19"><path d="M2.2 3.2a1.2 1.2 0 0 1 1.2-1.2h6.5a1.2 1.2 0 0 1 1.2 1.2V16H2.2z" fill="#c4c8cc"/><rect x="4" y="4" width="5.2" height="3.9" fill="#fff"/><rect x="1" y="16" width="11.2" height="1.9" fill="#5c6670"/><path d="M11 10.6c1 .1 1.6.8 1.6 2.2v1.4c0 .9 1.6.9 1.6 0V6.4l-2.6-2.8" stroke="#5c6670" stroke-width="1.3" fill="none"/></svg>
<div class="t" style="left:288.20px;top:14.54px;font-size:16.9px;line-height:21px;color:#6c757d;transform:scaleX(0.9043);transform-origin:0 0;">Gas: <span style="color:#0784c3">0.05 Gwei</span></div>
<div class="b" style="left:890px;top:3px;width:735px;height:46px;background:#f8f9fa;border:1px solid #e9ecef;border-radius:10px;box-sizing:border-box;"></div>
<svg class="b" style="left:903px;top:13px" width="26" height="25" viewBox="0 0 26 25"><circle cx="10.5" cy="10.5" r="9" fill="none" stroke="#adb5bd" stroke-width="1.9"/><path d="M17 17l7 7" stroke="#adb5bd" stroke-width="1.9" stroke-linecap="round"/></svg>
<div class="t" style="left:938.00px;top:13.55px;font-size:19.2px;line-height:24px;color:#6c757d;letter-spacing:-0.175px;">Search by Address / Txn Hash / Block / Token / Domain Name</div>
<div class="b" style="left:1586px;top:11px;width:29px;height:29px;background:#bdbebf;border-radius:6px;"></div>
<svg class="b" style="left:1593px;top:18px" width="14" height="16" viewBox="0 0 14 16"><path d="M9.5 3L5 14" stroke="#fff" stroke-width="1.5"/></svg>
<div class="b" style="left:1635px;top:2px;width:47px;height:48px;background:#fff;border:1px solid #e9ecef;border-radius:10px;box-sizing:border-box;"></div>
<svg class="b" style="left:1648px;top:14.5px" width="21" height="21" viewBox="0 0 21 21"><g stroke="#0784c3" stroke-width="1.7" fill="none" stroke-linecap="butt"><circle cx="10.5" cy="10.5" r="3.3"/><path d="M10.5 1v3M10.5 17v3M1 10.5h3M17 10.5h3M3.8 3.8l2.1 2.1M15.1 15.1l2.1 2.1M3.8 17.2l2.1-2.1M15.1 5.9l2.1-2.1"/></g></svg>
<div class="b" style="left:1692px;top:2px;width:48px;height:48px;background:#fff;border:1px solid #e9ecef;border-radius:10px;box-sizing:border-box;"></div>
<svg class="b" style="left:1707px;top:15px" width="19" height="22" viewBox="0 0 20 23"><g fill="#f0b90b"><path d="M10 0.3L16.2 3.9L13.9 5.2L10 3L6.1 5.2L3.8 3.9Z"/><path d="M10 4.4L11.9 5.5L10 6.6L8.1 5.5Z"/><path d="M0.3 5.5L2.7 4.1L4.9 5.4L2.5 6.8V8.9L0.3 7.6Z"/><path d="M19.7 5.5L17.3 4.1L15.1 5.4L17.5 6.8V8.9L19.7 7.6Z"/><path d="M3.6 7.4L6.5 5.8L10 7.8L13.5 5.8L16.4 7.4V10.4L11.8 13V17.4L10 18.4L8.2 17.4V13L3.6 10.4Z"/><path d="M0.3 9.9L2.5 11.2V15.2L6.2 17.3V19.8L0.3 16.4Z"/><path d="M19.7 9.9L17.5 11.2V15.2L13.8 17.3V19.8L19.7 16.4Z"/><path d="M3.6 11.8L5.9 13.1V15L3.6 13.7Z"/><path d="M16.4 11.8L14.1 13.1V15L16.4 13.7Z"/><path d="M7.3 18.1L10 19.6L12.7 18.1V20.6L10 22.2L7.3 20.6Z"/></g></svg>
</body></html>
